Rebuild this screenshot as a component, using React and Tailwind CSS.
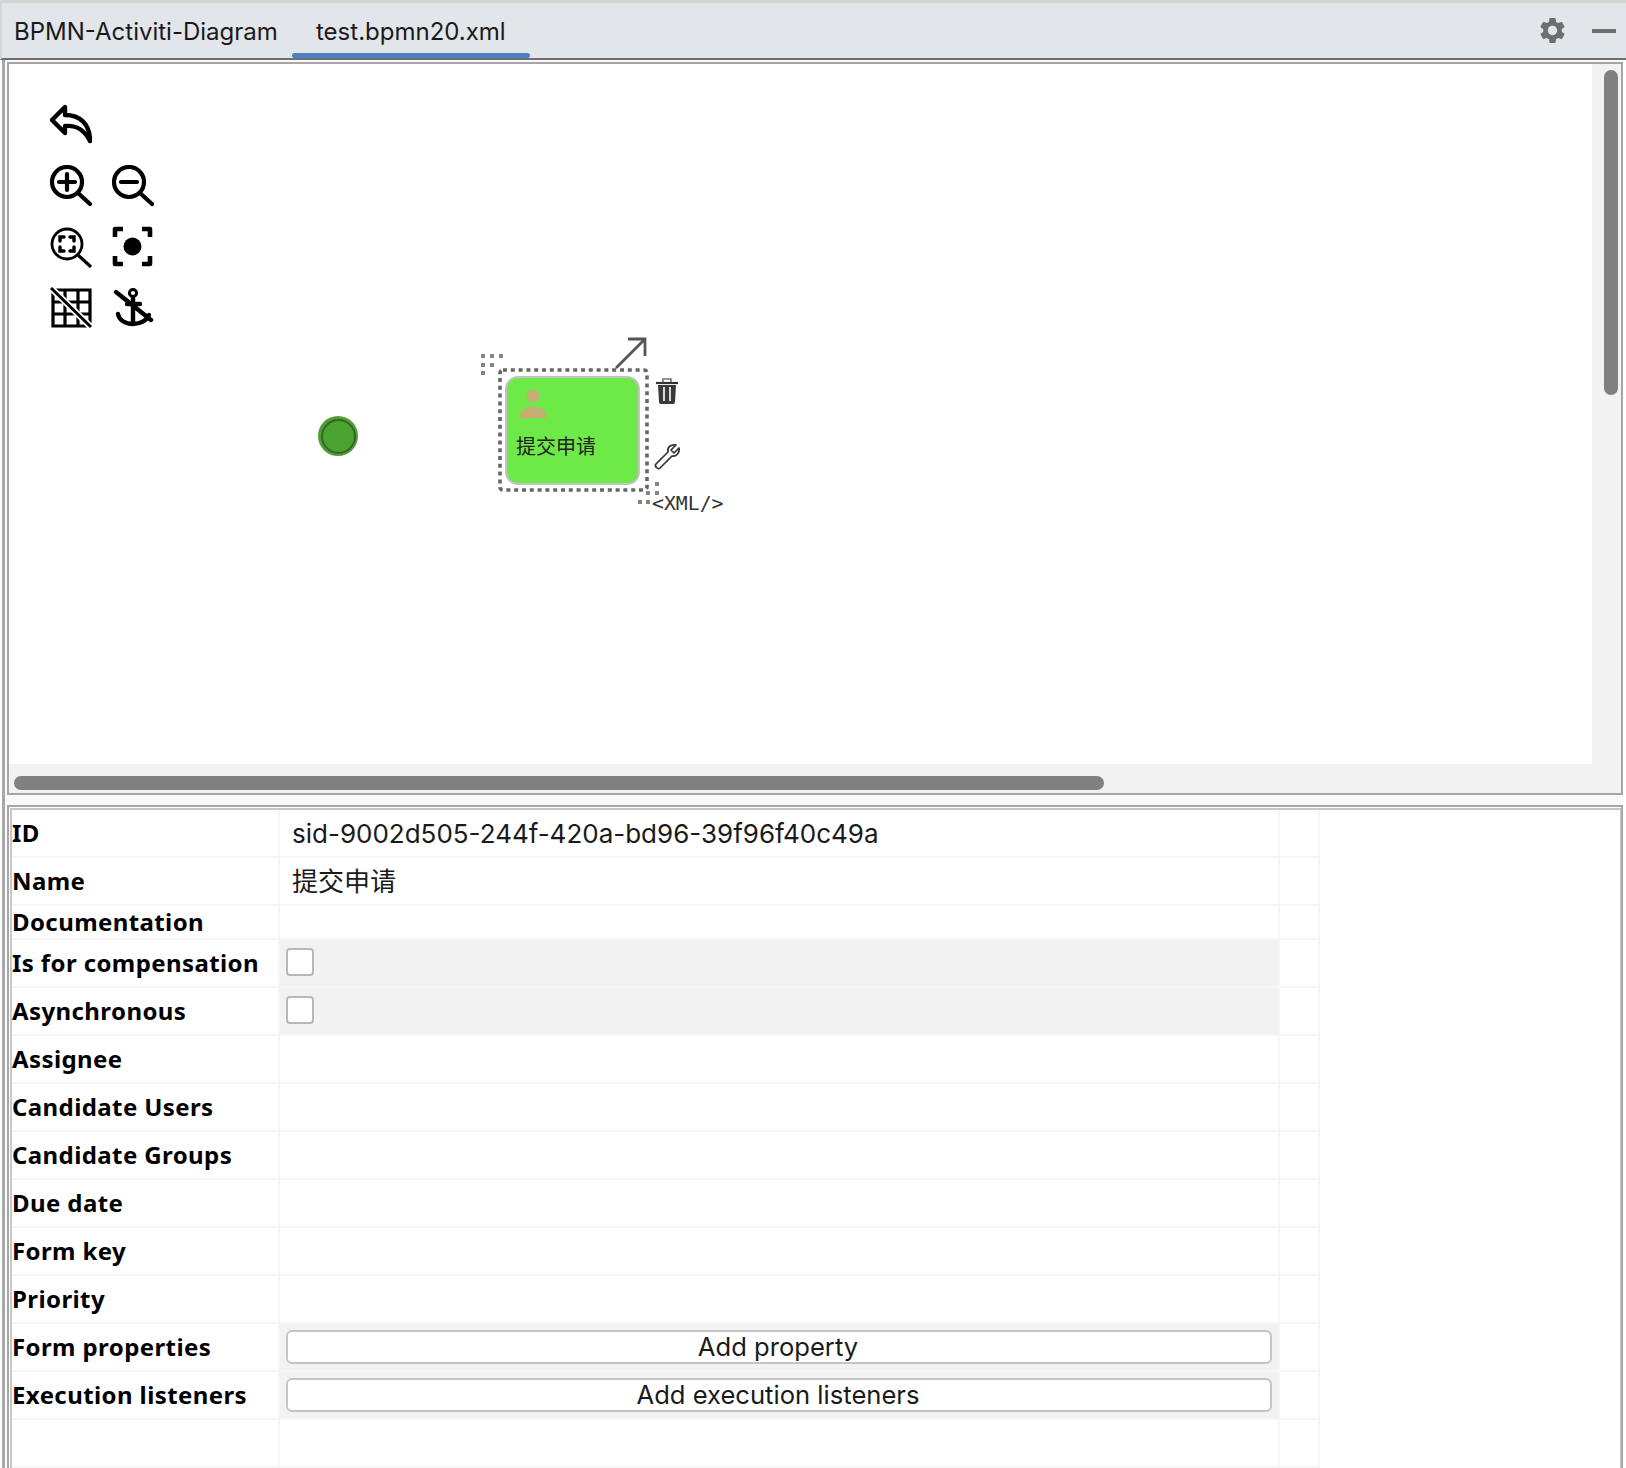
import { MdSettings } from 'react-icons/md';

const uiFont = { fontFamily: 'Inter, "Noto Sans CJK SC", sans-serif' };

const UndoIcon = () => (
  <svg viewBox="0 0 42 42" className="w-[42px] h-[42px]" fill="none" stroke="#000" strokeWidth="4.4" strokeLinejoin="round" strokeLinecap="round">
    <path d="M2 16 L15 3 L15 11 C30 11 40 20 40 37 C35 27 28 21 15 22 L15 29 Z" />
  </svg>
);

const ZoomInIcon = () => (
  <svg viewBox="0 0 42 42" className="w-[42px] h-[42px]" fill="none" stroke="#000" strokeWidth="4.2" strokeLinecap="round">
    <circle cx="17" cy="17" r="15" />
    <path d="M28 28 L40 39 M17 9 V25 M9 17 H25" />
  </svg>
);

const ZoomOutIcon = () => (
  <svg viewBox="0 0 42 42" className="w-[42px] h-[42px]" fill="none" stroke="#000" strokeWidth="4.2" strokeLinecap="round">
    <circle cx="17" cy="17" r="15" />
    <path d="M28 28 L40 39 M9 17 H25" />
  </svg>
);

const ZoomFitIcon = () => (
  <svg viewBox="0 0 42 42" className="w-[42px] h-[42px]" fill="none" stroke="#000" strokeWidth="2.8" strokeLinecap="round">
    <circle cx="17" cy="18" r="15" />
    <path d="M28 29 L40 40" strokeWidth="3.2" />
    <path d="M10 15 V11 H14 M20 11 H24 V15 M24 21 V25 H20 M14 25 H10 V21" strokeWidth="3.4" />
  </svg>
);

const FocusIcon = () => (
  <svg viewBox="0 0 42 42" className="w-[42px] h-[42px]" fill="none" stroke="#000" strokeWidth="4.6">
    <path d="M3 11 V3 H11 M30 3 H38 V11 M38 30 V38 H30 M11 38 H3 V30" strokeLinejoin="round" />
    <circle cx="20.5" cy="20.5" r="9" fill="#000" stroke="none" />
  </svg>
);

const GridOffIcon = () => (
  <svg viewBox="0 0 42 42" className="w-[42px] h-[42px]" fill="none" stroke="#000" strokeWidth="3.2">
    <path d="M3 3 H40 V39 H3 Z M3 15 H40 M3 27 H40 M15 3 V39 M28 3 V39" />
    <path d="M0 0 L42 41" stroke="#fff" strokeWidth="6.5" />
    <path d="M1 1 L41 40" strokeWidth="3" />
  </svg>
);

const AnchorOffIcon = () => (
  <svg viewBox="0 0 42 42" className="w-[42px] h-[42px]" fill="none" stroke="#000" strokeWidth="4.4" strokeLinecap="round">
    <circle cx="21" cy="6" r="3.6" strokeWidth="3" />
    <path d="M21 10 V36 M6 27 C7 33 13 37 21 37 C29 37 35 33 37 28" />
    <path d="M15 17 H28 M4 5 L39 33" />
  </svg>
);

const PersonIcon = () => (
  <svg viewBox="0 0 28 30" className="w-7 h-[30px]">
    <circle cx="14" cy="7" r="6.5" fill="#c8ae72" />
    <path d="M0 29 C1 21 7 17.5 14 17.5 C21 17.5 27 21 28 29 Z" fill="#c8ae72" />
  </svg>
);

const handleDots = [
  [483, 356], [492, 356], [501, 356], [483, 365], [492, 365], [483, 373],
  [657, 484], [657, 493], [648, 493], [640, 502], [648, 502],
];

// page coordinates, the svg sits at (480,330)
const SelectionOverlay = () => (
  <svg viewBox="480 330 210 180" className="absolute left-[471px] top-[266px] w-[210px] h-[180px]" fill="none">
    <rect x="500" y="370" width="147" height="120" rx="3" stroke="#666" strokeWidth="3.6" strokeDasharray="4 3.8" />
    {handleDots.map(([x, y]) => (
      <rect key={`${x}-${y}`} x={x - 2} y={y - 2} width="4" height="4" fill="#858585" />
    ))}
    <path d="M616 368 L644 340 M628 339 H645 V356" stroke="#555" strokeWidth="2.8" />
    {/* trash */}
    <path d="M663 382 V379 H671 V382" stroke="#777" strokeWidth="1.6" />
    <path d="M656 383 H678" stroke="#333" strokeWidth="2.2" />
    <path d="M658 385 H676 L675 402 Q675 404 673 404 H661 Q659 404 659 402 Z" fill="#3a3a3a" />
    <path d="M664 387 V401 M670 387 V401" stroke="#d8d8d8" strokeWidth="2" />
    {/* wrench */}
    <path d="M656 464 L668 452 C667 447 671 444 676 445 L671 450 L674 453 L679 448 C680 453 676 457 672 456 L660 468 C658 470 654 466 656 464 Z" stroke="#333" strokeWidth="1.7" strokeLinejoin="round" />
  </svg>
);

const Canvas = () => (
  <div className="relative flex-1 bg-white overflow-hidden pl-[41px] pt-[40px]">
    <div className="grid grid-cols-[42px_42px] gap-x-5 gap-y-[19px]">
      <UndoIcon />
      <div />
      <ZoomInIcon />
      <ZoomOutIcon />
      <ZoomFitIcon />
      <FocusIcon />
      <GridOffIcon />
      <AnchorOffIcon />
    </div>

    {/* start event */}
    <div className="absolute left-[309px] top-[352px] w-10 h-10 rounded-full bg-[#4aa32e] flex items-center justify-center">
      <div className="w-[35px] h-[35px] rounded-full border-2 border-[#3d5f38]" />
    </div>

    {/* user task */}
    <div className="absolute left-[496px] top-[312px] w-[135px] h-[109px] rounded-[13px] border-2 border-[#c4c4c4] bg-[#6de948] pl-[9px] pt-[11px]" style={uiFont}>
      <div className="pl-[3px]">
        <PersonIcon />
      </div>
      <div className="mt-[14px] text-[20px] leading-7 text-[#222]">提交申请</div>
    </div>

    <SelectionOverlay />
    <span className="absolute left-[643px] top-[430px] text-[19.8px] leading-5 text-[#333]" style={{ fontFamily: '"DejaVu Sans Mono", monospace' }}>
      {'<XML/>'}
    </span>
  </div>
);

const rows = [
  { label: 'ID', value: 'sid-9002d505-244f-420a-bd96-39f96f40c49a' },
  { label: 'Name', value: '提交申请' },
  { label: 'Documentation', short: true },
  { label: 'Is for compensation', check: true },
  { label: 'Asynchronous', check: true },
  { label: 'Assignee' },
  { label: 'Candidate Users' },
  { label: 'Candidate Groups' },
  { label: 'Due date' },
  { label: 'Form key' },
  { label: 'Priority' },
  { label: 'Form properties', button: 'Add property' },
  { label: 'Execution listeners', button: 'Add execution listeners' },
  { label: '' },
];

const ValueCell = ({ row }) => {
  if (row.check) {
    return (
      <div className="bg-[#f2f2f2] pl-[6px] pt-2">
        <div className="w-[28px] h-[28px] rounded-[4px] border-2 border-[#b8b8b8] bg-white" />
      </div>
    );
  }
  if (row.button) {
    return (
      <div className="bg-[#f2f2f2] px-[6px] flex items-center">
        <button className="w-full h-[34px] pr-[2px] rounded-[6px] border-2 border-[#c4c4c4] bg-white text-[25.6px] leading-none text-[#1a1a1a]" style={uiFont}>
          {row.button}
        </button>
      </div>
    );
  }
  return (
    <div className="bg-white pl-3 flex items-center text-[26px] text-[#1a1a1a]" style={uiFont}>
      {row.value}
    </div>
  );
};

const PropertyTable = () => (
  <div className="grid grid-cols-[266px_998px_38px] gap-[2px] pr-[2px] pb-[2px] w-fit bg-[#f6f6f6]">
    {rows.map((row, i) => (
      <div key={i} className="contents">
        <div className={`${row.short ? 'h-8' : 'h-[46px]'} bg-white flex items-center whitespace-nowrap text-[24px] tracking-[0.4px] font-bold text-black`} style={{ fontFamily: '"Noto Sans", sans-serif' }}>
          {row.label}
        </div>
        <ValueCell row={row} />
        <div className="bg-white" />
      </div>
    ))}
  </div>
);

export default function App() {
  return (
    <div className="h-[1468px] bg-white overflow-hidden flex flex-col">
      {/* tab bar */}
      <div className="h-[60px] shrink-0 bg-[#e2e5ea] border-t-[3px] border-l-2 border-t-[#d6d3d3] border-l-[#d6d6d6] border-b-2 border-b-[#6f6f6f] flex items-center justify-between text-[24px] text-[#1a1a1a]" style={uiFont}>
        <div className="flex h-full">
          <div className="pl-3 pr-[14px] pt-[2px] flex items-center">BPMN-Activiti-Diagram</div>
          <div className="relative w-[238px] pt-[2px] flex items-center justify-center">
            test.bpmn20.xml
            <div className="absolute left-0 right-0 bottom-0 h-[5px] rounded-full bg-[#4e7fc4]" />
          </div>
        </div>
        <div className="flex items-center gap-[24px] pr-[10px]">
          <MdSettings className="w-[31px] h-[31px] text-[#6e6e6e]" />
          <div className="w-6 h-1 bg-[#6e6e6e]" />
        </div>
      </div>

      <div className="flex-1 ml-[2px] mr-[3px] pt-[2px] border-l-[3px] border-[#a8a8a8] pl-[2px] bg-[#f9f9f9] flex flex-col gap-[10px] min-h-0">
        {/* canvas panel */}
        <div className="h-[733px] shrink-0 border-2 border-[#a6a6a6] bg-[#f2f2f2] flex flex-col">
          <div className="flex-1 flex min-h-0">
            <Canvas />
            <div className="w-[29px] shrink-0 pl-[12px] pr-[3px] pt-[6px]">
              <div className="h-[325px] rounded-full bg-[#808080]" />
            </div>
          </div>
          <div className="h-[29px] shrink-0 pl-[5px] pt-[12px]">
            <div className="w-[1090px] h-[14px] rounded-full bg-[#808080]" />
          </div>
        </div>

        {/* properties panel */}
        <div className="flex-1 min-h-0 border-t-2 border-x-2 border-[#a6a6a6] bg-white pt-px pl-px overflow-hidden">
          <div className="h-full border-t-2 border-l-2 border-r border-[#c8c8c8]">
            <PropertyTable />
          </div>
        </div>
      </div>
    </div>
  );
}
